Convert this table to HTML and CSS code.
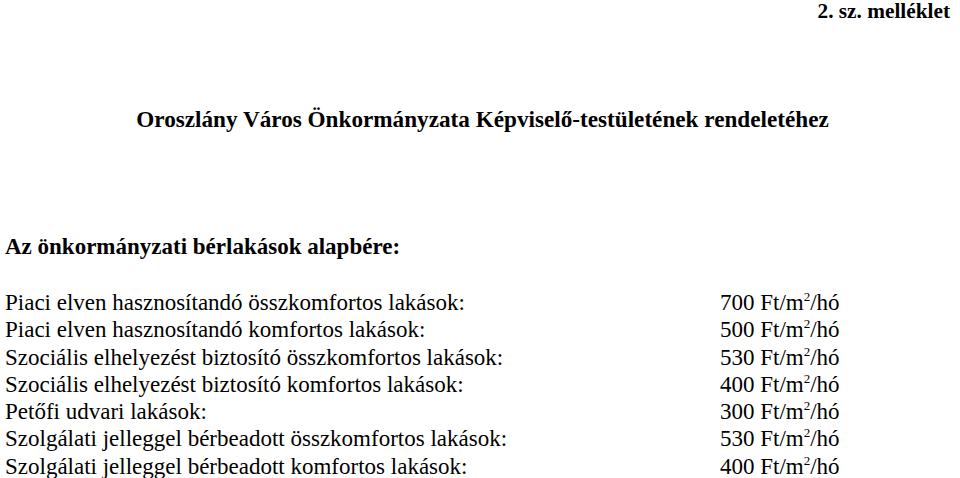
FILE: index.html
```html
<!DOCTYPE html>
<html lang="hu">
<head>
<meta charset="utf-8">
<link rel="stylesheet" href="styles.css">
</head>
<body>
<div class="page">
  <div class="annex">2. sz. melléklet</div>
  <h1 class="title">Oroszlány Város Önkormányzata Képviselő-testületének rendeletéhez</h1>
  <h2 class="heading">Az önkormányzati bérlakások alapbére:</h2>
  <div class="table">
    <div class="label">Piaci elven hasznosítandó összkomfortos lakások:</div><div class="value">700 Ft/m<sup>2</sup>/hó</div>
    <div class="label">Piaci elven hasznosítandó komfortos lakások:</div><div class="value">500 Ft/m<sup>2</sup>/hó</div>
    <div class="label">Szociális elhelyezést biztosító összkomfortos lakások:</div><div class="value">530 Ft/m<sup>2</sup>/hó</div>
    <div class="label">Szociális elhelyezést biztosító komfortos lakások:</div><div class="value">400 Ft/m<sup>2</sup>/hó</div>
    <div class="label">Petőfi udvari lakások:</div><div class="value">300 Ft/m<sup>2</sup>/hó</div>
    <div class="label">Szolgálati jelleggel bérbeadott összkomfortos lakások:</div><div class="value">530 Ft/m<sup>2</sup>/hó</div>
    <div class="label">Szolgálati jelleggel bérbeadott komfortos lakások:</div><div class="value">400 Ft/m<sup>2</sup>/hó</div>
  </div>
</div>
</body>
</html>
```
FILE: styles.css
```css
html, body {
  margin: 0;
  padding: 0;
  background: #fff;
}
body {
  font-family: "Liberation Serif", "Times New Roman", serif;
  color: #000;
}
.page {
  width: 960px;
  height: 478px;
  overflow: hidden;
  box-sizing: border-box;
  padding: 0 10px 0 5px;
}
.annex {
  text-align: right;
  font-weight: bold;
  font-size: 21.3px;
  line-height: 22px;
}
.title {
  margin: 85px 0 0 0;
  padding-left: 10px;
  text-align: center;
  font-size: 23.2px;
  line-height: 24px;
  font-weight: bold;
}
.heading {
  margin: 104px 0 0 0;
  font-size: 23px;
  line-height: 24px;
  font-weight: bold;
}
.table {
  margin-top: 30px;
  display: grid;
  grid-template-columns: 715px 1fr;
  font-size: 23px;
  line-height: 27.3px;
}
.label {
  white-space: nowrap;
}
.value sup {
  font-size: 13px;
  line-height: 0;
  vertical-align: 9px;
}
```
